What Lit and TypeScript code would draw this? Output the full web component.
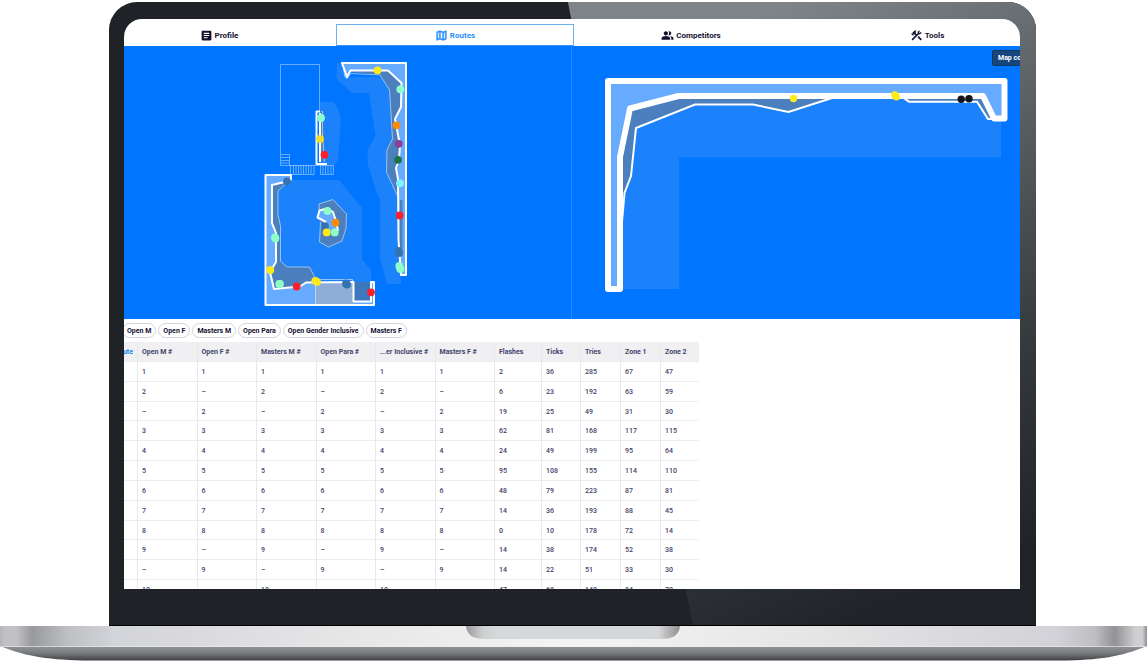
import { LitElement, html, svg, css } from "lit";
import { customElement, state } from "lit/decorators.js";
import { classMap } from "lit/directives/class-map.js";

type Dot = [number, number, string];

const YELLOW = "#fdea1b";
const MINT = "#8fffc8";
const RED = "#ff1f2c";
const STEEL = "#3573b0";
const ORANGE = "#ff8a0a";

const TABS = [
  {
    label: "Profile",
    icon: "M19 3H5c-1.1 0-2 .9-2 2v14c0 1.1.9 2 2 2h14c1.1 0 2-.9 2-2V5c0-1.1-.9-2-2-2zm-5 14H7v-2h7v2zm3-4H7v-2h10v2zm0-4H7V7h10v2z",
  },
  {
    label: "Routes",
    icon: "M20.5 3l-.16.03L15 5.1 9 3 3.36 4.9c-.21.07-.36.25-.36.48V20.5c0 .28.22.5.5.5l.16-.03L9 18.9l6 2.1 5.64-1.9c.21-.07.36-.25.36-.48V3.5c0-.28-.22-.5-.5-.5zM10 5.47l4 1.4v11.66l-4-1.4V5.47zm-5 .99l3-1.01v11.7l-3 1.16V6.46zm14 11.08l-3 1.01V6.86l3-1.16v11.84z",
  },
  {
    label: "Competitors",
    icon: "M16.67 13.13C18.04 14.06 19 15.32 19 17v3h4v-3c0-2.18-3.57-3.47-6.33-3.87zM15 12c2.21 0 4-1.79 4-4s-1.79-4-4-4c-.47 0-.91.1-1.33.24C14.5 5.27 15 6.58 15 8s-.5 2.73-1.33 3.76c.42.14.86.24 1.33.24zM9 12c2.21 0 4-1.79 4-4s-1.79-4-4-4-4 1.79-4 4 1.79 4 4 4zm0 1c-2.67 0-8 1.34-8 4v3h16v-3c0-2.66-5.33-4-8-4z",
  },
  {
    label: "Tools",
    icon: "M13.78 15.17l2.12-2.12 6 6-2.12 2.12zM17.5 10c1.93 0 3.5-1.57 3.5-3.5 0-.58-.16-1.12-.41-1.6l-2.7 2.7-1.49-1.49 2.7-2.7c-.48-.25-1.02-.41-1.6-.41C15.57 3 14 4.57 14 6.5c0 .41.08.8.21 1.16l-1.85 1.85-1.78-1.78.71-.71-1.41-1.41L12 3.49c-1.17-1.17-3.07-1.17-4.24 0L4.22 7.03l1.41 1.41H2.81l-.71.71 3.54 3.54.71-.71V9.15l1.41 1.41.71-.71 1.78 1.78-7.41 7.41 2.12 2.12L16.34 9.79c.36.13.75.21 1.16.21z",
  },
];

const CATEGORIES = ["Open M", "Open F", "Masters M", "Open Para", "Open Gender Inclusive", "Masters F"];

const COLUMNS = [
  ["Open M #", "rank"],
  ["Open F #", "rank"],
  ["Masters M #", "rank"],
  ["Open Para #", "rank"],
  ["...er Inclusive #", "rank"],
  ["Masters F #", "rank"],
  ["Flashes", "flashes"],
  ["Ticks", "narrow"],
  ["Tries", "count"],
  ["Zone 1", "count"],
  ["Zone 2", "narrow"],
];

// Rank among the M-side categories, rank among the F-side categories, then the five counts.
const RESULTS = [
  ["1", "1", 2, 36, 285, 67, 47],
  ["2", "–", 6, 23, 192, 63, 59],
  ["–", "2", 19, 25, 49, 31, 30],
  ["3", "3", 62, 81, 168, 117, 115],
  ["4", "4", 24, 49, 199, 95, 64],
  ["5", "5", 95, 108, 155, 114, 110],
  ["6", "6", 48, 79, 223, 87, 81],
  ["7", "7", 14, 36, 193, 88, 45],
  ["8", "8", 0, 10, 178, 72, 14],
  ["9", "–", 14, 38, 174, 52, 38],
  ["–", "9", 14, 22, 51, 33, 30],
  ["10", "–", 47, 60, 140, 84, 70],
];

const dots = (list: Dot[], r: number) =>
  list.map(([x, y, fill]) => svg`<circle cx=${x} cy=${y} r=${r} fill=${fill}></circle>`);

@customElement("gym-map")
export class GymMap extends LitElement {
  static styles = css`
    :host { display: block; }
    svg { display: block; width: 100%; height: auto; }
    .shade { fill: #1b82fb; }
    .pad { fill: #66abff; }
    .volume { fill: #4c7fbd; }
    .wall { fill: none; stroke: #fff; stroke-width: 2; stroke-linejoin: round; }
    .edge { fill: none; stroke: #fff; stroke-opacity: 0.5; stroke-width: 1; }
    .plan { fill: none; stroke: #fff; stroke-opacity: 0.4; stroke-width: 1; }
  `;

  private marks: Dot[] = [
    [377.5, 70.3, YELLOW], [400.3, 89.3, MINT], [396.5, 125.3, ORANGE], [398.8, 143.8, "#8a4097"],
    [398, 159.8, "#1c7444"], [400, 183.2, "#7ff2ff"], [399.6, 215.5, RED], [398.8, 251, STEEL],
    [399.2, 253, STEEL], [399.3, 266, MINT], [400.3, 269, MINT], [321, 118, MINT], [320, 139, "#f0dd2d"],
    [324.5, 154.8, RED], [287, 181.3, STEEL], [275, 237.5, MINT], [275.4, 238.5, MINT], [270.3, 270, YELLOW],
    [279.3, 284, MINT], [280, 284, MINT], [296.7, 286.5, RED], [315.3, 280.8, YELLOW], [317, 281.8, YELLOW],
    [346, 283.5, STEEL], [347, 284.5, STEEL], [371, 292.3, RED], [327.5, 211, MINT], [325, 226.3, STEEL],
    [335.5, 222.7, ORANGE], [326.7, 232.4, YELLOW], [334.7, 232.4, MINT],
  ];

  render() {
    const wallFace = "347,77 350.5,70.5 388,70.5 401.5,83 401,107 395,119 400,145 399,160 396,168 398,179";
    const roomFace = "291,180 289,181 272,185 272,223 276,233 276,262 270,272 274,289 300,286.5 306,282.5";
    return html`<svg viewBox="101 46 470 273" role="img" aria-label="Main hall map">
      <path class="shade" d="M337 63H342L347 77H401V284H387L380 258V198L378 197 368 165 367.500 150 375.500 136 369 93H352L336.500 79Z" />
      <path class="shade" d="M320 102H334L338 109 341 119 338 160 334 165H320Z" />
      <path class="shade" d="M278 180H339L362 208V259L371 270V283H278Z" />

      <path class="plan" d="M319.500 111V64.500H280.500V165.500H326M281 154.500H289.500V165M281 157.500H289M281 160.500H289M281 163H289" />
      <path class="plan" d="M290.500 165V174.500H314V165M293.500 165V174M296 165V174M298.500 165V174M301 165V174M303.500 165V174M306 165V174M308.500 165V174M311 165V174" />
      <path class="plan" d="M320.500 165V174.500H333.500V165.500H326M323 165V174M325.500 165V174M328 165V174M331 165V174" />

      <path class="volume" d="M321 111H323L325 161H321Z" />
      <path class="edge" d="M321 111.500H322.500V135L324.500 162" />
      <path class="wall" d="M320 113V162" />
      <path class="wall" d="M320 111.500H316.500V164H327" />

      <polygon class="volume" points="${wallFace} 398,196 387,172 386.500,150 392,139 389.500,90 380,75 350.500,72" />
      <polygon class="pad" points="342,63 406,63 406,275 401,275 398.500,240 ${wallFace.split(" ").reverse().join(" ")}" />
      <path class="volume" d="M400 200H402.500V248H399Z" />
      <path class="edge" d="M343 66L345 77 347 78.500 351 73.500 380 75 389.500 90 392.500 139 387 150 386.500 172 397 195" />
      <polygon class="wall" points="342,63 406,63 406,275 401,275 398.500,240 ${wallFace.split(" ").reverse().join(" ")}" />

      <polygon class="volume" points="${roomFace} 317,281 309.500,267 287,267 280.500,261 280.500,226 278,215 278,191" />
      <path class="pad" d="M291 175H265.500V305H374V282H306L300 286.500 274 289 270 272 276 262V233L272 223V185L291 180Z" />
      <path d="M315.500 283H353V304H315.500Z" fill="#8eaed8" />
      <path d="M354 282H371V301H354Z" fill="#3d78bd" />
      <path class="edge" d="M289 181L278 191V215L280.500 226V261L287 267H309.500L316 279.500H352.500V282M315.500 283V304" />
      <polyline class="wall" points="${roomFace} 353.500,282 353.500,301.500 371,301.500 371,282 374,282 374,305 265.500,305 265.500,175 291,175 291,180" />

      <path class="volume" d="M319 204L333 199.500 346.500 214 346 228 342 241 328.500 247 319.500 242 321 221 317.500 217Z" />
      <path class="edge" d="M319 210V204L333 199.500 346.500 214 346 228 342 241 328.500 247 319.500 242 320.500 222" />
      <path class="pad" d="M326 222L317.500 217 319.500 210.500 327 208.500 333 212 336 221 338 231 330 233Z" />
      <path class="wall" d="M326 222L317.500 217.500 319.500 210.500 327 208.500 333 212 336 221 338 231" />
      ${dots(this.marks, 3.9)}
    </svg>`;
  }
}

@customElement("corner-map")
export class CornerMap extends LitElement {
  static styles = css`
    :host { display: block; }
    svg { display: block; width: 100%; height: auto; }
    .shade { fill: #1b82fb; }
    .volume { fill: #4c7fbd; stroke: #fff; stroke-width: 2; }
    .wall { fill: #66abff; stroke: #fff; stroke-width: 6; stroke-linejoin: round; }
  `;

  private marks: Dot[] = [
    [793.5, 98.5, YELLOW], [894.8, 95, YELLOW], [896.3, 96.8, YELLOW], [961.2, 99.3, "#151515"], [969, 98.7, "#151515"],
  ];

  render() {
    return html`<svg viewBox="572 46 473 273" role="img" aria-label="Corner wall map">
      <path class="shade" d="M622 98H1001V157.500H679V289H622Z" />
      <path class="volume" d="M622 222L624.500 193 631 176 636 128 695 104.500H753L788.500 112 832 98 678 96 630 108 620 157Z" />
      <path class="volume" d="M902 97L909 101.700H977L988 119H996L983 97Z" />
      <path class="wall" d="M608 289V81H1004.500V118.500H994L983 96H678.500L630 108.500 620 157V289Z" />
      ${dots(this.marks, 3.7)}
    </svg>`;
  }
}

@customElement("results-table")
export class ResultsTable extends LitElement {
  static styles = css`
    :host { display: block; }
    table {
      table-layout: fixed;
      width: 598px;
      height: 258px;
      border-spacing: 0;
      font-size: 7px;
      line-height: 9px;
      color: #45426a;
    }
    th, td {
      box-sizing: border-box;
      padding: 2px 0 0 4px;
      border-left: 1px solid #e8e8ef;
      border-bottom: 1px solid #ececf2;
      text-align: left;
      white-space: nowrap;
    }
    td { font-weight: 500; }
    th { height: 20px; background: #f0f0f2; font-weight: 700; color: #42446b; }
    .route { width: 36px; padding: 2px 4px 0 0; border-left: 0; text-align: right; color: #1583f5; }
    .flashes { width: 47px; }
    .narrow { width: 39px; }
    .count { width: 40px; }
  `;

  render() {
    return html`<table>
      <thead>
        <tr>
          <th class="route" scope="col">Route</th>
          ${COLUMNS.map(([label, kind]) => html`<th class=${kind} scope="col">${label}</th>`)}
        </tr>
      </thead>
      <tbody>
        ${RESULTS.map(([m, f, ...counts]) => html`<tr>
          <td class="route"></td>
          ${[m, f, m, f, m, f, ...counts].map((value) => html`<td>${value}</td>`)}
        </tr>`)}
      </tbody>
    </table>`;
  }
}

@customElement("app-root")
export class AppRoot extends LitElement {
  static styles = css`
    :host {
      display: block;
      padding-top: 2px;
      background: #fff;
      font-family: Roboto, "Noto Sans", sans-serif;
      color: #14102f;
    }
    .stage { display: grid; grid-template-columns: 109fr 927fr 112fr; }
    .lid {
      grid-column: 2;
      position: relative;
      overflow: hidden;
      padding: 17px 16px 36px 15px;
      border-bottom: 1px solid #000;
      border-radius: 28px 28px 0 0;
      background: #1f2227;
    }
    .glare {
      position: absolute;
      inset: 0;
      background: linear-gradient(155deg, #7e8487 30%, #62686b 45%, #4e5356 58%, #33383c 74%, #202429 92%);
      clip-path: polygon(49.5% 0, 100% 0, 100% 100%, 63% 100%);
    }
    .screen {
      position: relative;
      overflow: hidden;
      aspect-ratio: 896 / 570;
      border-radius: 18px 18px 0 0;
      background: #fff;
    }
    .page { margin: 0 -25px 0 -23px; }
    .tabs { display: grid; grid-template-columns: repeat(4, 1fr); padding-top: 6px; }
    .tab {
      display: flex;
      align-items: center;
      justify-content: center;
      gap: 2px;
      height: 21px;
      color: inherit;
      font-size: 8px;
      font-weight: 700;
      line-height: 12px;
      text-decoration: none;
    }
    .tab svg { width: 13px; height: 13px; fill: currentColor; }
    .current { color: #2e90fa; outline: 1px solid #6cb0ee; box-shadow: inset 0 -1px #2e90fa; }
    .current svg { stroke: currentColor; stroke-width: 1; }
    .maps { position: relative; display: grid; grid-template-columns: 471fr 473fr; background: #0075ff; }
    .hall { border-right: 1px solid #2389ff; }
    .controls {
      position: absolute;
      top: 4px;
      right: 3px;
      width: 50px;
      height: 16px;
      padding: 0 0 0 5px;
      border: 1px solid #103860;
      border-radius: 2px;
      background: #17467e;
      color: #fff;
      font: inherit;
      font-size: 7px;
      font-weight: 700;
      text-align: left;
      white-space: nowrap;
      overflow: hidden;
    }
    .chips { display: flex; gap: 2px; padding: 4px 21px; }
    .chip {
      flex: none;
      height: 15px;
      padding: 1px 4px 0;
      border: 1px solid #d3d2de;
      border-radius: 8px;
      background: #fff;
      color: inherit;
      font: inherit;
      font-size: 7px;
      font-weight: 700;
      line-height: 12px;
    }
    .base { display: block; width: 100%; height: auto; }
  `;

  @state() private current = "Routes";

  render() {
    return html`
      <div class="stage">
        <div class="lid">
          <div class="glare"></div>
          <div class="screen">
            <div class="page">
              <nav class="tabs">
                ${TABS.map(
                  (tab) => html`<a
                    href="#${tab.label.toLowerCase()}"
                    class=${classMap({ tab: true, current: tab.label === this.current })}
                    @click=${() => (this.current = tab.label)}
                    ><svg viewBox="0 0 24 24" aria-hidden="true"><path d=${tab.icon} /></svg>${tab.label}</a
                  >`
                )}
              </nav>
              <div class="maps">
                <gym-map class="hall"></gym-map>
                <corner-map></corner-map>
                <button class="controls" type="button">Map controls</button>
              </div>
              <div class="chips">
                ${CATEGORIES.map((name) => html`<button class="chip" type="button">${name}</button>`)}
              </div>
              <results-table></results-table>
            </div>
          </div>
        </div>
      </div>
      <svg class="base" viewBox="0 0 1148 36" aria-hidden="true">
        <defs>
          <linearGradient id="plate">
            <stop offset="0" stop-color="#b5b5b9" />
            <stop offset="0.004" stop-color="#c0c0c3" />
            <stop offset="0.014" stop-color="#c2c2c5" />
            <stop offset="0.028" stop-color="#999a9d" />
            <stop offset="0.06" stop-color="#bfc0c4" />
            <stop offset="0.1" stop-color="#d3d4d9" />
            <stop offset="0.3" stop-color="#e6e6e7" />
            <stop offset="0.5" stop-color="#f4f4f4" />
            <stop offset="0.7" stop-color="#e6e6e6" />
            <stop offset="0.92" stop-color="#d2d2d8" />
            <stop offset="0.955" stop-color="#bdbdc2" />
            <stop offset="0.972" stop-color="#929295" />
            <stop offset="0.99" stop-color="#cfcfd1" />
            <stop offset="0.996" stop-color="#cfcfd1" />
            <stop offset="1" stop-color="#8e8e92" />
          </linearGradient>
          <linearGradient id="under" x1="0" y1="0" x2="0" y2="1">
            <stop offset="0" stop-color="#939699" />
            <stop offset="0.5" stop-color="#77797c" />
            <stop offset="0.9" stop-color="#4b4c50" />
            <stop offset="1" stop-color="#3a3a3e" />
          </linearGradient>
          <linearGradient id="notch">
            <stop offset="0" stop-color="#98999b" />
            <stop offset="0.08" stop-color="#cfd0d1" />
            <stop offset="0.15" stop-color="#d7d8d9" />
            <stop offset="0.9" stop-color="#d5d6d7" />
            <stop offset="1" stop-color="#8f8f91" />
          </linearGradient>
        </defs>
        <path d="M0 20H1147C1120 31 1100 34 1060 34.500H90C50 34 27 31 0 20Z" fill="url(#under)" />
        <path d="M0 0H1147V20Q1146 21 1144 21H3Q1 21 0 20Z" fill="url(#plate)" />
        <path d="M2 20.500H1145" stroke="#eeeeef" stroke-opacity="0.6" />
        <path d="M466 0H680C679 9 673 13 661 13H485C473 13 467 9 466 0Z" fill="url(#notch)" />
      </svg>
    `;
  }
}
